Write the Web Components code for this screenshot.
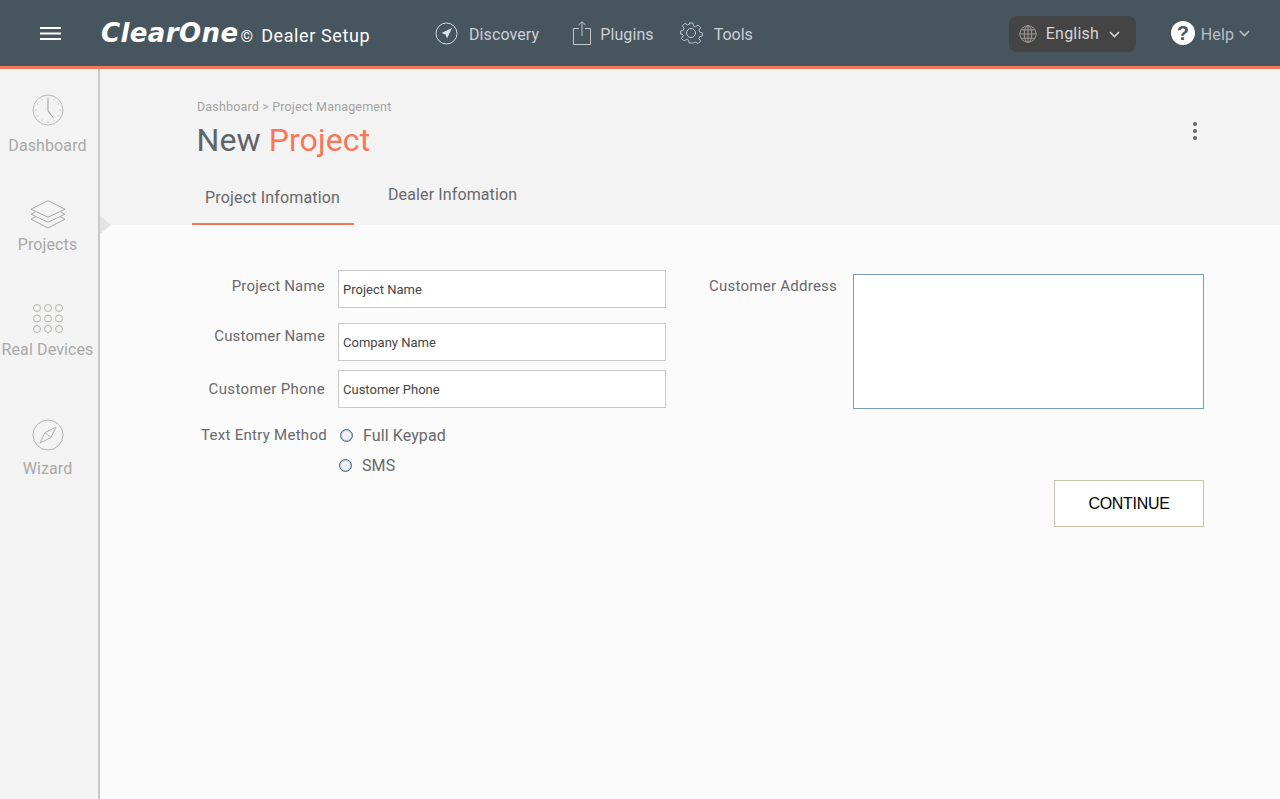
<!DOCTYPE html>
<html>
<head>
<meta charset="utf-8">
<title>ClearOne Dealer Setup</title>
<style>
    html, body { margin: 0; height: 100%; }
    body { font-family: Roboto, "Liberation Sans", sans-serif; background: #fbfbfb; overflow: hidden; }
</style>
</head>
<body>
<app-shell>
    <top-bar slot="top"></top-bar>
    <side-nav slot="side"></side-nav>
    <page-head slot="head"></page-head>
    <project-form slot="main"></project-form>
</app-shell>

<script>
const icons = {
    menu: `<svg width="21" height="13" viewBox="0 0 21 13"><path d="M0 1h21M0 6.500h21M0 12h21" stroke="#fff" stroke-width="2"/></svg>`,
    discovery: `<svg width="23" height="23" viewBox="0 0 23 23" fill="none"><circle cx="11.500" cy="11.500" r="10.500" stroke="#d5d9dc"/><path d="M17 6L6.500 11l4 1.500 1.500 4z" fill="#dfe2e4"/></svg>`,
    plugins: `<svg width="19" height="24" viewBox="0 0 19 24" fill="none" stroke="#c9c5cc"><path d="M6 7.500H.5v16h17v-16H12M9 15V1M5.500 4L9 .8 12.500 4"/></svg>`,
    tools: `<svg width="24" height="24" viewBox="0 0 24 24" fill="none" stroke="#c9ced2"><circle cx="12" cy="12" r="4.500"/><path d="M10 1h4l.7 3.200 2.200.9 2.800-1.800 2.800 2.800-1.800 2.800.9 2.200 2.900.7v3.400l-2.900.7-.9 2.200 1.800 2.800-2.800 2.800-2.800-1.800-2.200.9L14 23h-4l-.7-3.200-2.200-.9-2.800 1.800-2.800-2.800 1.800-2.800-.9-2.200L.5 13.200V9.800l2.900-.7.9-2.200-1.800-2.800 2.800-2.800 2.800 1.800 2.200-.9z" transform="translate(1.100 1.100) scale(.91)"/></svg>`,
    globe: `<svg width="18" height="18" viewBox="0 0 18 18" fill="none" stroke="#a39c99"><circle cx="9" cy="9" r="8.200"/><ellipse cx="9" cy="9" rx="3.800" ry="8.200"/><path d="M9 .8v16.400M.8 9h16.400M2 4.800h14M2 13.200h14"/></svg>`,
    chevron: `<svg width="11" height="7" viewBox="0 0 11 7" fill="none"><path d="M1 1l4.500 4.500L10 1" stroke="currentColor" stroke-width="1.600"/></svg>`,
    clock: `<svg width="32" height="32" viewBox="0 0 32 32" fill="none" stroke="#bdb9b5"><circle cx="16" cy="16" r="15"/><path d="M16 5v12l5.500 7" stroke="#a9a9ad" stroke-width="1.200"/><path d="M16 3v2M16 27v2M3 16h2M27 16h2M9.500 4.800l1 1.700M21.500 25.500l1 1.700M4.800 9.500l1.700 1M25.500 21.500l1.700 1M22.500 4.800l-1 1.700M10.500 25.500l-1 1.700M27.200 9.500l-1.700 1M6.500 21.500l-1.700 1" stroke="#cfcbc8"/></svg>`,
    layers: `<svg width="36" height="29" viewBox="0 0 36 29" fill="none" stroke="#a8a8a8"><path d="M18 .7L35 9.200 18 17.200 1 9.200z"/><path d="M5.500 11.800L1 14.200l17 8 17-8-4.500-2.400"/><path d="M5.500 16.800L1 19.200l17 8.800 17-8.800-4.500-2.400"/></svg>`,
    grid: `<svg width="30" height="29" viewBox="0 0 30 29" fill="none" stroke="#b5b2ae"><circle cx="4" cy="4" r="3.500"/><circle cx="15" cy="4" r="3.500"/><circle cx="26" cy="4" r="3.500"/><circle cx="4" cy="14.500" r="3.500"/><circle cx="15" cy="14.500" r="3.500"/><circle cx="26" cy="14.500" r="3.500"/><circle cx="4" cy="25" r="3.500"/><circle cx="15" cy="25" r="3.500"/><circle cx="26" cy="25" r="3.500"/></svg>`,
    compass: `<svg width="32" height="32" viewBox="0 0 32 32" fill="none" stroke="#b3b0ad"><circle cx="16" cy="16" r="15"/><path d="M24 8l-11 5.500L8 24l11-5.500z"/><path d="M13 13.500l6 5"/></svg>`
};

// contenedor general: barra arriba, menu a la izquierda, contenido al lado
class AppShell extends HTMLElement {
    constructor() {
        super();
        this.attachShadow({ mode: "open" });
        this.shadowRoot.innerHTML = `
            <style>
                :host { display: flex; flex-direction: column; height: 799px; }
                .body { flex: 1; display: flex; min-height: 0; }
                .side { width: 98px; flex: none; background: #f3f3f3; border-right: 2px solid #c9c9c9; }
                .content { flex: 1; min-width: 0; background: #fbfbfb; }
            </style>
            <slot name="top"></slot>
            <div class="body">
                <div class="side"><slot name="side"></slot></div>
                <div class="content">
                    <slot name="head"></slot>
                    <slot name="main"></slot>
                </div>
            </div>
        `;
    }
}
customElements.define("app-shell", AppShell);

class TopBar extends HTMLElement {
    constructor() {
        super();
        this.attachShadow({ mode: "open" });
        this.shadowRoot.innerHTML = `
            <style>
                :host { display: flex; align-items: center; height: 66px; background: #47555f; border-bottom: 3px solid #fa7659; color: #ccd1d4; font-size: 16px; letter-spacing: .1px; }
                .menu { display: flex; margin-left: 40px; width: 61px; }
                .logo { display: flex; align-items: baseline; width: 334px; height: 30px; color: #fff; }
                .brand { font: italic bold 26px/30px "DejaVu Sans", sans-serif; letter-spacing: .4px; }
                .copy { font-size: 16px; margin-left: 2px; }
                .app { font-size: 18px; letter-spacing: .6px; margin-left: 8px; line-height: 30px; }
                .nav { display: flex; align-items: center; }
                .nav span { margin-top: 2px; }
                .nav svg { display: block; }
                .lang { display: flex; align-items: center; width: 127px; height: 36px; box-sizing: border-box; padding-left: 10px; margin: 2px 0 0 auto; background: #444444; border-radius: 8px; color: #d6d6d6; }
                .lang .txt { margin: -2px 10px 0 9px; letter-spacing: .2px; }
                .help { display: flex; align-items: center; margin: 0 30px 0 35px; color: #b9c0c5; }
                .help span { margin-top: 2px; }
                .q { width: 24px; height: 24px; border-radius: 50%; background: #fff; color: #47555f; font: bold 20px/24px "Liberation Sans", sans-serif; text-align: center; margin: 0 6px 0 0 !important; }
                .help svg { margin-left: 5px; }
            </style>
            <div class="menu">${icons.menu}</div>
            <div class="logo">
                <span class="brand">ClearOne</span><span class="copy">©</span><span class="app">Dealer Setup</span>
            </div>
            <div class="nav">
                ${icons.discovery}<span style="margin-left:11px;margin-right:34px">Discovery</span>
                ${icons.plugins}<span style="margin-left:8px;margin-right:25px">Plugins</span>
                ${icons.tools}<span style="margin-left:11px;letter-spacing:0">Tools</span>
            </div>
            <div class="lang">${icons.globe}<span class="txt">English</span>${icons.chevron}</div>
            <div class="help"><span class="q">?</span><span>Help</span>${icons.chevron}</div>
        `;
    }
}
customElements.define("top-bar", TopBar);

class SideItem extends HTMLElement {
    constructor() {
        super();
        this.attachShadow({ mode: "open" });
        this.shadowRoot.innerHTML = `
            <style>
                :host { display: flex; flex-direction: column; align-items: center; color: #a9a9a9; font-size: 16px; line-height: 20px; white-space: nowrap; letter-spacing: .12px; }
                .ico { display: flex; justify-content: center; align-items: center; }
            </style>
            <div class="ico"></div>
            <div class="lbl"><slot></slot></div>
        `;
    }
    connectedCallback() {
        this.shadowRoot.querySelector(".ico").innerHTML = icons[this.getAttribute("icon")];
        this.shadowRoot.querySelector(".lbl").style.marginTop = (this.getAttribute("gap") || 0) + "px";
        this.style.marginTop = (this.getAttribute("top") || 0) + "px";
    }
}
customElements.define("side-item", SideItem);

class SideNav extends HTMLElement {
    constructor() {
        super();
        this.attachShadow({ mode: "open" });
        this.shadowRoot.innerHTML = `
            <style>
                :host { display: block; width: 95px; }
            </style>
            <side-item icon="clock" top="25" gap="10">Dashboard</side-item>
            <side-item icon="layers" top="44" gap="6">Projects</side-item>
            <side-item icon="grid" top="49" gap="7">Real Devices</side-item>
            <side-item icon="compass" top="59" gap="8">Wizard</side-item>
        `;
    }
}
customElements.define("side-nav", SideNav);

class PageHead extends HTMLElement {
    constructor() {
        super();
        this.attachShadow({ mode: "open" });
        this.shadowRoot.innerHTML = `
            <style>
                :host { display: block; position: relative; height: 156px; box-sizing: border-box; background: #f3f3f3; padding: 29px 0 0 97px; }
                .crumb { font-size: 12.500px; line-height: 18px; color: #a3a3a3; letter-spacing: .17px; }
                h1 { margin: 5px 0 0 -.5px; font-weight: 400; font-size: 32px; line-height: 38px; color: #5f6567; letter-spacing: .1px; }
                h1 span { color: #fa7659; }
                .tabs { display: flex; align-items: flex-start; margin: 16px 0 0 -5px; font-size: 16px; color: #68686c; letter-spacing: .17px; }
                .tab { padding: 0 13px; box-sizing: border-box; }
                .tab.on { width: 162px; border-bottom: 2px solid #f47455; height: 44px; padding-top: 7px; margin-top: 6px; }
                .tab.off { margin-left: 21px; padding-top: 4px; margin-top: 6px; letter-spacing: .12px; }
                .dots { position: absolute; right: 83px; top: 53px; display: flex; flex-direction: column; gap: 3px; }
                .dots i { width: 4px; height: 4px; border-radius: 50%; background: #666; }
                .arrow { position: absolute; left: 0; top: 147px; border-left: 11px solid #e3e3e3; border-top: 9px solid transparent; border-bottom: 9px solid transparent; }
            </style>
            <div class="crumb">Dashboard &gt; Project Management</div>
            <h1>New <span>Project</span></h1>
            <div class="tabs">
                <div class="tab on">Project Infomation</div>
                <div class="tab off">Dealer Infomation</div>
            </div>
            <div class="dots"><i></i><i></i><i></i></div>
            <div class="arrow"></div>
        `;
    }
}
customElements.define("page-head", PageHead);

// fila de etiqueta + campo
class FormRow extends HTMLElement {
    constructor() {
        super();
        this.attachShadow({ mode: "open" });
        this.shadowRoot.innerHTML = `
            <style>
                :host { display: flex; align-items: flex-start; }
                label { width: 125px; flex: none; text-align: right; font-size: 15px; line-height: 20px; color: #68686c; white-space: nowrap; }
                .box { margin-left: 13px; width: 328px; height: 38px; box-sizing: border-box; background: #fff; border: 1px solid #c9c9c9; padding-left: 4px; font-size: 13px; letter-spacing: 0; color: #444; }
            </style>
            <label></label>
            <div class="box"></div>
        `;
    }
    connectedCallback() {
        this.shadowRoot.querySelector("label").textContent = this.getAttribute("label");
        this.shadowRoot.querySelector(".box").textContent = this.getAttribute("hint");
        this.shadowRoot.querySelector("label").style.marginTop = (this.getAttribute("shift") || 6) + "px";
        this.shadowRoot.querySelector(".box").style.lineHeight = (this.getAttribute("lh") || 38) + "px";
        this.style.marginTop = (this.getAttribute("top") || 0) + "px";
    }
}
customElements.define("form-row", FormRow);

class RadioOption extends HTMLElement {
    constructor() {
        super();
        this.attachShadow({ mode: "open" });
        this.shadowRoot.innerHTML = `
            <style>
                :host { display: flex; align-items: center; height: 30px; font-size: 16px; color: #68686c; letter-spacing: .1px; }
                i { width: 13px; height: 13px; box-sizing: border-box; border-radius: 50%; border: 1px solid #44678a; box-shadow: inset 0 0 0 1px rgba(74,109,142,.35); background: #f2f2f2; margin-right: 10px; }
            </style>
            <i></i><slot></slot>
        `;
    }
}
customElements.define("radio-option", RadioOption);

class ProjectForm extends HTMLElement {
    constructor() {
        super();
        this.attachShadow({ mode: "open" });
        this.shadowRoot.innerHTML = `
            <style>
                :host { display: flex; align-items: flex-start; padding: 45px 76px 0 100px; }
                .left { width: 466px; flex: none; }
                .right { margin-left: 43px; flex: 1; }
                .addr { display: flex; align-items: flex-start; }
                .addr label { width: 128px; flex: none; margin-top: 6px; font-size: 15px; line-height: 20px; color: #68686c; letter-spacing: .25px; white-space: nowrap; }
                .addr .area { flex: 1; height: 135px; margin: 4px 0 0 16px; box-sizing: border-box; background: #fff; border: 1px solid #7c9cbc; }
                .method { display: flex; margin-top: 12px; }
                .method label { width: 127px; text-align: right; font-size: 15px; line-height: 20px; margin-top: 5px; color: #68686c; white-space: nowrap; letter-spacing: .28px; }
                .opts { margin-left: 13px; }
                .foot { display: flex; justify-content: flex-end; margin-top: 71px; }
                button { width: 150px; height: 47px; background: #fff; border: 1px solid #c5c4ab; font: 16px "Liberation Sans", sans-serif; letter-spacing: -.3px; color: #000; padding: 0; }
            </style>
            <div class="left">
                <form-row style="letter-spacing:.2px" label="Project Name" hint="Project Name" shift="6"></form-row>
                <form-row style="letter-spacing:.13px" label="Customer Name" hint="Company Name" top="15" shift="3" lh="37"></form-row>
                <form-row style="letter-spacing:.35px" label="Customer Phone" hint="Customer Phone" top="9" shift="9"></form-row>
                <div class="method">
                    <label>Text Entry Method</label>
                    <div class="opts">
                        <radio-option>Full Keypad</radio-option>
                        <radio-option style="margin-left:-1px">SMS</radio-option>
                    </div>
                </div>
            </div>
            <div class="right">
                <div class="addr">
                    <label>Customer Address</label>
                    <div class="area"></div>
                </div>
                <div class="foot"><button>CONTINUE</button></div>
            </div>
        `;
    }
}
customElements.define("project-form", ProjectForm);
</script>
</body>
</html>
